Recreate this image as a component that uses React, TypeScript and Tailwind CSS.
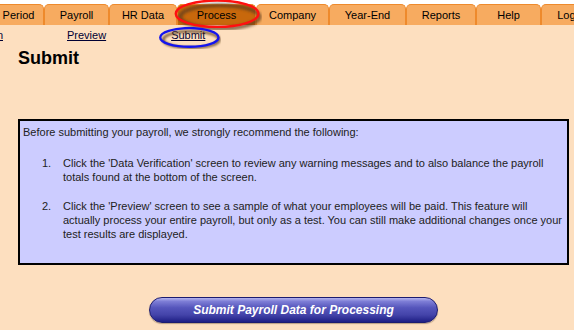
import React from 'react'

const tabs = [
  { label: 'Period', w: 'w-[51px]', first: true },
  { label: 'Payroll', w: 'w-[65px]' },
  { label: 'HR Data', w: 'w-[68px]' },
  { label: 'Process', w: 'w-[79px]', active: true },
  { label: 'Company', w: 'w-[73px]' },
  { label: 'Year-End', w: 'w-[77px]' },
  { label: 'Reports', w: 'w-[70px]' },
  { label: 'Help', w: 'w-[65px]' },
  { label: 'Logout', w: 'w-[66px]' },
]

function Ellipse({ color, className }: { color: string; className: string }) {
  const id = 'sh' + color.replace('#', '')
  return (
    <svg className={className} viewBox="0 0 100 40" preserveAspectRatio="none">
      <defs>
        <filter id={id} x="-20%" y="-40%" width="140%" height="180%">
          <feGaussianBlur stdDeviation="1.8" />
        </filter>
      </defs>
      <ellipse cx="52" cy="23" rx="45" ry="15" fill="none" stroke="#5a3a1c" strokeOpacity="0.75" strokeWidth="5" filter={`url(#${id})`} />
      <ellipse cx="49" cy="19" rx="47" ry="17" fill="none" stroke={color} strokeWidth="2.4" vectorEffect="non-scaling-stroke" />
    </svg>
  )
}

export default function App() {
  return (
    <div className="relative h-[330px] w-[574px] overflow-hidden bg-[#fddfbf] font-['Liberation_Sans',Arial,sans-serif] text-[11px] text-[#1a1a1a]">
      {/* tab strip */}
      <div className="flex h-[25px] items-end bg-white">
        {tabs.map((t) => (
          <div
            key={t.label}
            className={`flex h-[21px] shrink-0 items-center justify-center rounded-t-[5px] border border-b-0 border-[#ee8a2c] text-black ${t.w} ${
              t.first ? 'ml-[-7px]' : ''
            } ${t.active ? 'bg-[#c8680c]' : 'bg-[#f7ab60]'}`}
          >
            {t.label}
          </div>
        ))}
      </div>

      {/* sub navigation */}
      <div className="flex h-[21px] items-center text-[#000033]">
        <div className="ml-[-57px] w-[60px] text-right underline">Verification</div>
        <a className="ml-[64px] underline">Preview</a>
        <a className="ml-[65px] underline">Submit</a>
      </div>

      <h1 className="ml-[18px] mt-[1px] text-[18px] font-bold leading-[22px] text-black">Submit</h1>

      {/* recommendation box */}
      <div className="ml-[18px] mt-[50px] h-[146px] w-[551px] border-2 border-black bg-[#ccccff] pl-[3px] pt-[4px] leading-[14px] text-[#222]">
        <p>Before submitting your payroll, we strongly recommend the following:</p>
        <div className="mt-[17px] flex">
          <span className="ml-[19px] w-[21px] shrink-0">1.</span>
          <p>
            Click the 'Data Verification' screen to review any warning messages and to also balance the payroll
            <br />
            totals found at the bottom of the screen.
          </p>
        </div>
        <div className="mt-[15px] flex">
          <span className="ml-[19px] w-[21px] shrink-0">2.</span>
          <p>
            Click the 'Preview' screen to see a sample of what your employees will be paid. This feature will
            <br />
            actually process your entire payroll, but only as a test. You can still make additional changes once your
            <br />
            test results are displayed.
          </p>
        </div>
      </div>

      {/* submit button */}
      <div className="ml-[18px] mt-[32px] flex w-[551px] justify-center">
        <button className="flex h-[26px] w-[289px] items-center justify-center rounded-full border border-[#1c1c70] bg-[linear-gradient(to_bottom,#b4b4ee_0%,#7e7ed6_14%,#5656bc_40%,#4444aa_70%,#1e1e84_100%)] text-[12px] font-bold italic text-white shadow-[0_1px_1px_rgba(60,40,20,0.35)]">
          Submit Payroll Data for Processing
        </button>
      </div>

      {/* annotation ellipses */}
      <Ellipse color="#ff1010" className="absolute left-[174px] top-[-1px] h-[31px] w-[88px]" />
      <Ellipse color="#1414ee" className="absolute left-[159px] top-[27px] h-[22px] w-[62px]" />
    </div>
  )
}
